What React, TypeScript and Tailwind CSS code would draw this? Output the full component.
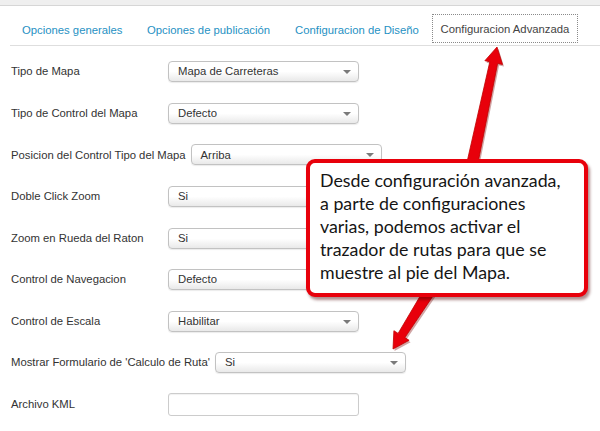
import React from 'react';

const rows: { label: string; value?: string; input?: boolean }[] = [
  { label: 'Tipo de Mapa', value: 'Mapa de Carreteras' },
  { label: 'Tipo de Control del Mapa', value: 'Defecto' },
  { label: 'Posicion del Control Tipo del Mapa', value: 'Arriba' },
  { label: 'Doble Click Zoom', value: 'Si' },
  { label: 'Zoom en Rueda del Raton', value: 'Si' },
  { label: 'Control de Navegacion', value: 'Defecto' },
  { label: 'Control de Escala', value: 'Habilitar' },
  { label: "Mostrar Formulario de 'Calculo de Ruta'", value: 'Si' },
  { label: 'Archivo KML', input: true },
];

const Select = ({ value }: { value: string }) => (
  <div className="relative flex h-[21px] w-[191px] flex-none items-center rounded-[4px] border border-[#c2c2c2] bg-linear-to-b from-white via-white to-[#e9e9e9] pl-[9px] text-[11.3px] text-[#333] shadow-[0_1px_1px_rgba(0,0,0,0.08)]">
    {value}
    <span className="absolute right-[7px] top-[8px] h-0 w-0 border-x-[4px] border-t-[4px] border-x-transparent border-t-[#7a7a7a]" />
  </div>
);

const Arrows = () => (
  <svg className="pointer-events-none absolute inset-0" width="600" height="431">
    <g fill="#7a0000" opacity="0.35" transform="translate(1.5 2)">
      <polygon points="477.4,166.1 497.6,63.5 502.5,64.5 497,47 484.9,60.7 489.8,61.8 466.6,163.9" />
      <polygon points="433.7,294.9 404.9,337.6 409.1,340.3 393,349 393.9,330.7 398.1,333.4 424.3,289.1" />
    </g>
    <g fill="#e8000b" stroke="#c00000" strokeWidth="0.8" strokeLinejoin="round">
      <polygon points="477.4,166.1 497.6,63.5 502.5,64.5 497,47 484.9,60.7 489.8,61.8 466.6,163.9" />
      <polygon points="433.7,294.9 404.9,337.6 409.1,340.3 393,349 393.9,330.7 398.1,333.4 424.3,289.1" />
    </g>
  </svg>
);

export default function App() {
  return (
    <div className="relative h-[431px] w-[600px] overflow-hidden bg-white font-['Liberation_Sans',Arial,sans-serif]">
      <div className="h-[6px] border-b border-[#d6d6d6] bg-[#efefef]" />

      <div className="ml-[10px] flex h-[40px] items-end whitespace-nowrap border-b border-[#dedede] pb-[2px] text-[11.3px]">
        <a className="flex h-[29px] flex-none items-center px-[12px] pt-[3px] text-[#1f91c3]">Opciones generales</a>
        <a className="flex h-[29px] flex-none items-center px-[12.5px] pt-[3px] text-[#1f91c3]">Opciones de publicación</a>
        <a className="flex h-[29px] flex-none items-center px-[12.5px] pt-[3px] text-[#1f91c3]">Configuracion de Diseño</a>
        <div className="flex-1" />
        <a className="mr-[22px] flex h-[29px] w-[146px] flex-none items-center justify-center border border-dotted border-[#8a8a8a] pt-[2px] text-[#444]">
          Configuracion Advanzada
        </a>
      </div>

      <div className="pt-[5px]">
        {rows.map((r) => (
          <div key={r.label} className="flex h-[41.6px] items-center pl-[11px]">
            <span className="mr-[5px] min-w-[152px] whitespace-nowrap text-[11.3px] text-[#333]">{r.label}</span>
            {r.input ? (
              <div className="h-[23px] w-[191px] flex-none rounded-[3px] border border-[#cccccc] bg-white shadow-[inset_0_1px_1px_rgba(0,0,0,0.06)]" />
            ) : (
              <Select value={r.value!} />
            )}
          </div>
        ))}
      </div>

      <Arrows />

      <div className="absolute left-[306px] top-[159px] h-[138px] w-[282px] rounded-[9px] border-[4px] border-[#e8000b] bg-white pl-[10px] pt-[6px] font-['Lato',sans-serif] text-[17.8px] leading-[23px] text-[#151515] shadow-[2px_3px_3px_rgba(80,0,0,0.45)]">
        Desde configuración avanzada,
        <br />
        a parte de configuraciones
        <br />
        varias, podemos activar el
        <br />
        trazador de rutas para que se
        <br />
        muestre al pie del Mapa.
      </div>
    </div>
  );
}
